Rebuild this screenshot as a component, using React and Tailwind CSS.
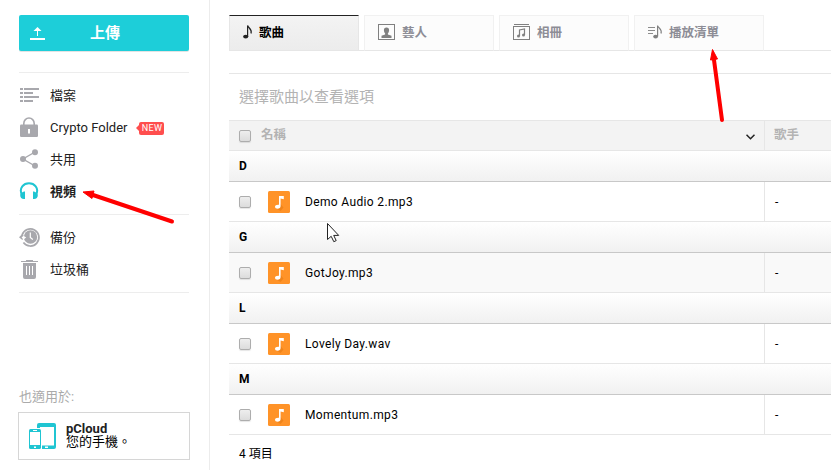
import React from "react";

const groups = [
  { letter: "D", file: "Demo Audio 2.mp3", bg: "bg-white", width: "w-[105px]" },
  { letter: "G", file: "GotJoy.mp3", bg: "bg-[#f9f9f9]", width: "w-[64px]" },
  { letter: "L", file: "Lovely Day.wav", bg: "bg-white", width: "w-[86px]" },
  { letter: "M", file: "Momentum.mp3", bg: "bg-white", width: "w-[88px]" },
];

function FilesIcon() {
  return (
    <svg width="20" height="20" viewBox="0 0 20 20" fill="#a8a8ad" shapeRendering="crispEdges">
      <path d="M1 3h3v2H1zM5 3h15v2H5zM1 7h3v2H1zM5 7h9v2H5zM1 11h3v2H1zM5 11h15v2H5zM1 15h3v2H1zM5 15h9v2H5z" />
    </svg>
  );
}

function LockIcon() {
  return (
    <svg width="20" height="22" viewBox="0 0 20 22">
      <path d="M4.8 9V7.4a5.2 5.4 0 0 1 10.4 0V9" fill="none" stroke="#a8a8ad" strokeWidth="1.6" />
      <rect x="1" y="8.5" width="18" height="12.5" rx="1.2" fill="#a8a8ad" />
      <rect x="9" y="13" width="2" height="4.5" fill="#fff" />
    </svg>
  );
}

function ShareIcon() {
  return (
    <svg width="20" height="20" viewBox="0 0 20 20" fill="#a8a8ad">
      <path d="M16 3 4 10l12 7" fill="none" stroke="#a8a8ad" strokeWidth="1.4" />
      <circle cx="4" cy="10" r="3" />
      <circle cx="16" cy="3.2" r="3" />
      <circle cx="16" cy="16.8" r="3" />
    </svg>
  );
}

function HeadphonesIcon() {
  return (
    <svg width="20" height="20" viewBox="0 0 20 20">
      <path d="M3.4 15C1.2 11 1.6 7.500 3.300 5.300 6.500 1.200 13.500 1.200 16.700 5.300 18.400 7.500 18.800 11 16.600 15" fill="none" stroke="#20c5d2" strokeWidth="2" />
      <path d="M5 10.500h1V18H5C2.500 18 1.200 16.500 1.200 14.300 1.200 12.500 2.700 11.500 5 10.500zM15 10.500h-1V18h1c2.500 0 3.800-1.500 3.800-3.700 0-1.800-1.500-2.800-3.800-3.800z" fill="#20c5d2" />
    </svg>
  );
}

function HistoryIcon() {
  return (
    <svg width="22" height="22" viewBox="0 0 22 22">
      <path d="M3.100 9A8.600 8.600 0 1 1 4.400 16.500" fill="none" stroke="#a8a8ad" strokeWidth="1.700" />
      <circle cx="11.500" cy="11" r="6.700" fill="#a8a8ad" />
      <path d="M0 11.300 3 8.300l3.500 3H5.300l-2 2.700z" fill="#a8a8ad" />
      <path d="M2.600 11.600 4.500 9.700l2.700 1.900-2.700 1.900z" fill="#fff" />
      <path d="M11.300 6.500v5l2.500 2" fill="none" stroke="#fff" strokeWidth="1.200" />
    </svg>
  );
}

function TrashIcon() {
  return (
    <svg width="20" height="20" viewBox="0 0 20 20" fill="#a8a8ad">
      <path d="M2 2h5V1h7v1h5v1H2zM4 4h13v14q0 2-2 2H6q-2 0-2-2z" />
      <path d="M7.500 7v9M10.500 7v9M13.500 7v9" stroke="#fff" strokeWidth="1" />
    </svg>
  );
}

function NavItem({ icon, label, strong, badge }) {
  return (
    <div className="flex h-8 items-center">
      <span className="flex w-[31px] items-center">{icon}</span>
      <span className={strong ? "text-[13px] font-bold leading-none text-[#222]" : "text-[13px] leading-none text-[#222]"}>{label}</span>
      {badge && (
        <span className="ml-[9px] mt-[2px] flex items-center">
          <svg width="3" height="6" viewBox="0 0 3 6"><path d="M3 0 0 3l3 3z" fill="#ff4e4e" /></svg>
          <span className="flex h-[13px] w-[25px] items-center justify-center rounded-[2px] bg-[#ff4e4e] text-[9px] leading-none tracking-[0.3px] text-white">NEW</span>
        </span>
      )}
    </div>
  );
}

function Checkbox() {
  return <span className="block size-[12px] shrink-0 rounded-[2px] border border-[#adadad] bg-gradient-to-b from-[#eeeeee] to-[#dcdcdc] shadow-[0_1px_1px_rgba(0,0,0,0.1)]" />;
}

function SongIcon() {
  return (
    <svg width="22" height="22" viewBox="0 0 22 22" className="shrink-0">
      <rect width="22" height="22" rx="1.500" fill="#ff9328" />
      <path d="M8 17.300 12.500 13l3 3.500-3 3.500z" fill="#e87c12" opacity=".65" />
      <path d="M11 5h4.800v3.200L12.600 7.500V15c0 1.800-1.300 2.800-3 2.800-1.600 0-2.600-.8-2.600-2s1.300-2.200 4-2z" fill="#fff" />
    </svg>
  );
}

function NoteIcon() {
  return (
    <svg width="10" height="14" viewBox="0 0 10 14">
      <path d="M4.600 11.500V.5C5.500 3.200 9.500 4.500 8 8.500" fill="none" stroke="#222" strokeWidth="1.200" />
      <ellipse cx="2.700" cy="11.600" rx="2.600" ry="1.900" fill="#222" />
    </svg>
  );
}

function ArtistIcon() {
  return (
    <svg width="17" height="16" viewBox="0 0 17 16">
      <rect x=".5" y=".5" width="16" height="15" fill="none" stroke="#808080" />
      <path d="M8.500 3.500c1.800 0 2.600 1.100 2.600 2.700S10.300 9 9.900 9.300v1.200l3.600 1.200V14h-10v-2.300l3.600-1.200V9.300C6.700 9 5.900 7.800 5.900 6.200s.8-2.700 2.600-2.700z" fill="#808080" />
    </svg>
  );
}

function AlbumIcon() {
  return (
    <svg width="17" height="16" viewBox="0 0 17 16">
      <path d="M1 .5h15" stroke="#808080" />
      <rect x=".5" y="2.500" width="16" height="13" fill="none" stroke="#808080" />
      <path d="M6.500 12V6l5-1v6" fill="none" stroke="#808080" strokeWidth="1.200" />
      <circle cx="5.500" cy="12" r="1.500" fill="#808080" />
      <circle cx="10.500" cy="11" r="1.500" fill="#808080" />
    </svg>
  );
}

function PlaylistIcon() {
  return (
    <svg width="15" height="14" viewBox="0 0 15 14">
      <path d="M0 2.500h7M0 5.500h7M0 8.500h5" stroke="#8c8c8c" />
      <path d="M9.600 11.500V.5c.5 2.500 4.900 3.500 3.400 8" fill="none" stroke="#808080" strokeWidth="1.200" />
      <ellipse cx="7.600" cy="11.600" rx="2.400" ry="1.900" fill="#808080" />
    </svg>
  );
}

function Tab({ icon, label, gap, active }) {
  return (
    <div className={active
      ? "flex h-9 w-[130px] items-center border border-[#e6e6e6] border-t-[#222] bg-gradient-to-b from-[#f3f3f3] to-[#ececec] pl-[13px] text-black"
      : "flex h-9 w-[130px] items-center border border-[#f1f1f1] border-b-[#e6e6e6] bg-[#fcfcfc] pl-[13px] text-[#8d8d96]"}>
      <span className="-mt-[2px]">{icon}</span>
      <span className={`${gap} text-[12.500px] font-bold leading-none`}>{label}</span>
    </div>
  );
}

function Sidebar() {
  return (
    <aside className="flex w-[210px] shrink-0 flex-col border-r border-[#ececec] pl-[19px] pr-[19px] pt-[15px]">
      <button className="flex h-9 w-[170px] shrink-0 items-center rounded-[2px] bg-[#1dced9] pl-[11px] text-white shadow-[0_1px_0_#e3e3e3]">
        <svg width="15" height="14" viewBox="0 0 15 14" fill="#fff">
          <path d="M0 12h15v2H0zM7.500 1l4 4H8v5H7V5H3.500z" />
        </svg>
        <span className="ml-[45px] text-[15px] font-bold leading-none">上傳</span>
      </button>
      <nav className="mt-[21px] w-[170px] border-t border-[#ededed]">
        <div className="border-b border-[#ededed] pb-[7px] pt-[6px]">
          <NavItem icon={<FilesIcon />} label="檔案" />
          <NavItem icon={<LockIcon />} label="Crypto Folder" badge />
          <NavItem icon={<ShareIcon />} label="共用" />
          <NavItem icon={<HeadphonesIcon />} label="視頻" strong />
        </div>
        <div className="border-b border-[#ededed] pb-[7px] pt-[6px]">
          <NavItem icon={<HistoryIcon />} label="備份" />
          <NavItem icon={<TrashIcon />} label="垃圾桶" />
        </div>
      </nav>
      <div className="mt-auto pb-[10px]">
        <p className="text-[13px] leading-[30px] text-[#aaa]">也適用於:</p>
        <div className="-ml-px flex h-12 w-[172px] items-center border border-[#d6d6d6] pl-[10px]">
          <svg width="27" height="26" viewBox="0 0 27 26">
            <path d="M8 5V2q0-2 2-2h15q2 0 2 2v22q0 2-2 2H13v-3.500h12V4H11v1z" fill="#20c5d2" />
            <rect y="6" width="12" height="20" rx="1.500" fill="#20c5d2" />
            <path d="M1 9h10v13H1zM4 7h4v1H4zM5 23.500h2v1.500H5zM16 23.500h3v1.500h-3z" fill="#fff" />
          </svg>
          <div className="ml-[10px] mt-[-3px] text-[13px] leading-[13px] text-black">
            <div className="font-bold text-[#222]">pCloud</div>
            <div>您的手機。</div>
          </div>
        </div>
      </div>
    </aside>
  );
}

export default function App() {
  return (
    <div className="relative flex h-[470px] w-[831px] overflow-hidden bg-white font-[Roboto,'Noto_Sans_CJK_TC',sans-serif] text-[12px] text-black">
      <Sidebar />
      <main className="ml-[19px] min-w-0 flex-1 pt-[15px]">
        <div className="flex h-9 gap-[5px] bg-[linear-gradient(#e6e6e6,#e6e6e6)] bg-[length:100%_1px] bg-bottom bg-no-repeat">
          <Tab icon={<NoteIcon />} label="歌曲" gap="ml-[6px]" active />
          <Tab icon={<ArtistIcon />} label="藝人" gap="ml-[7px]" />
          <Tab icon={<AlbumIcon />} label="相冊" gap="ml-[7px]" />
          <Tab icon={<PlaylistIcon />} label="播放清單" gap="ml-[6px]" />
        </div>
        <div className="mt-[22px] flex h-[47px] items-center border-t border-[#e6e6e6] pl-[10px] text-[15px] text-[#b3b3b3]">選擇歌曲以查看選項</div>
        <div className="flex h-[31px] border-y border-[#e6e6e6] bg-[#f3f3f3] text-[12.500px] font-bold text-[#b3b3b3]">
          <div className="flex w-[536px] items-center border-r border-[#e6e6e6] pl-[10px] pr-[9px]">
            <Checkbox />
            <span className="ml-[10px] leading-none">名稱</span>
            <svg className="ml-auto mt-[2px]" width="9" height="6" viewBox="0 0 9 6"><path d="m.5.800 4 4 4-4" fill="none" stroke="#222" strokeWidth="1.500" /></svg>
          </div>
          <div className="flex items-center pl-[9px] leading-none">歌手</div>
        </div>
        {groups.map((g) => (
          <section key={g.letter}>
            <div className="flex h-[31px] items-center border-b border-[#c8c8c8] bg-gradient-to-b from-white to-[#f1f1f1] pl-[10px] font-bold">{g.letter}</div>
            <div className={`flex h-10 border-b border-[#e6e6e6] ${g.bg}`}>
              <div className="flex w-[536px] items-center border-r border-[#e6e6e6] pl-[10px]">
                <Checkbox />
                <span className="ml-[17px]"><SongIcon /></span>
                <span className="ml-[15px] whitespace-nowrap tracking-[0.350px]">{g.file}</span>
              </div>
              <div className="flex items-center pl-[10px]">-</div>
            </div>
          </section>
        ))}
        <div className="flex h-[35px] items-center pl-[10px] pt-[3px]">4 項目</div>
      </main>
      <svg className="pointer-events-none absolute left-0 top-0" width="831" height="470" viewBox="0 0 831 470">
        <path d="M172 221.500 93 195" stroke="#f00" strokeWidth="4" strokeLinecap="round" />
        <path d="m83 192 11-1-2 7.500z" fill="#f00" stroke="#f00" />
        <path d="m722 120-8-60" stroke="#f00" strokeWidth="4" strokeLinecap="round" />
        <path d="m712.500 49.500 5 9.500-7 1z" fill="#f00" stroke="#f00" />
        <path d="M327.500 223.500v16l3.700-3.200 2.600 5.400 2.400-1.100-2.500-5.200h5z" fill="#fff" stroke="#222" />
      </svg>
    </div>
  );
}
